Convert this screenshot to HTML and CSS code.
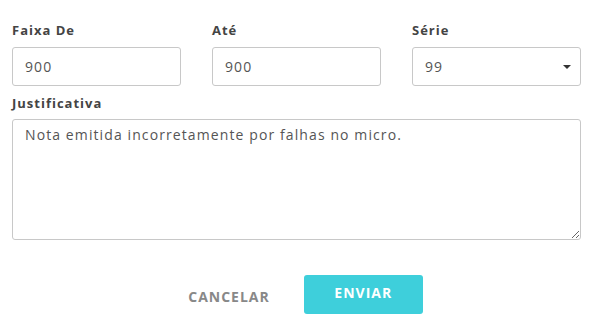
FILE: index.html
```html
<!DOCTYPE html>
<html lang="pt-br">
<head>
    <meta charset="UTF-8">
    <title>Inutilizar Numeração</title>
    <link rel="stylesheet" href="styles.css">
</head>
<body>
    <form class="form">
        <div class="row">
            <div class="form-group">
                <label for="faixa-de">Faixa De</label>
                <input type="text" id="faixa-de" value="900">
            </div>
            <div class="form-group">
                <label for="ate">Até</label>
                <input type="text" id="ate" value="900">
            </div>
            <div class="form-group">
                <label for="serie">Série</label>
                <div class="select">
                    <select id="serie">
                        <option>99</option>
                    </select>
                    <span class="caret"></span>
                </div>
            </div>
        </div>

        <div class="form-group">
            <label for="justificativa">Justificativa</label>
            <textarea id="justificativa">Nota emitida incorretamente por falhas no micro.</textarea>
        </div>

        <div class="actions">
            <button type="button" class="btn-cancel">Cancelar</button>
            <button type="button" class="btn-send">Enviar</button>
        </div>
    </form>
</body>
</html>
```

FILE: styles.css
```css
body {
    margin: 0;
    padding: 20px 11px 0 12px;
    font-family: "Open Sans", sans-serif;
    background-color: white;
    color: #444;
}

.row {
    display: grid;
    grid-template-columns: repeat(3, 1fr);
    gap: 31px;
}

.form-group label {
    display: block;
    font-size: 13px;
    font-weight: bold;
    letter-spacing: 1px;
    color: #444;
    margin-bottom: 7px;
    line-height: 20px;
}

.form-group input,
.form-group select,
.form-group textarea {
    width: 100%;
    box-sizing: border-box;
    border: 1px solid #c8c8c8;
    border-radius: 3px;
    font-family: "Open Sans", sans-serif;
    font-size: 14px;
    letter-spacing: 1.1px;
    color: #555;
    background-color: white;
}

.form-group input,
.form-group select {
    height: 39px;
    padding: 0 12px;
}

.select {
    position: relative;
}

.select select {
    appearance: none;
    -webkit-appearance: none;
}

.caret {
    position: absolute;
    right: 10px;
    top: 18px;
    border-left: 4px solid transparent;
    border-right: 4px solid transparent;
    border-top: 4px solid #333;
}

.row + .form-group {
    margin-top: 7px;
}

.row + .form-group label {
    margin-bottom: 6px;
}

.form-group textarea {
    display: block;
    height: 121px;
    padding: 5px 12px;
    resize: vertical;
}

.actions {
    display: flex;
    justify-content: center;
    align-items: center;
    gap: 34px;
    margin-top: 33px;
    padding-left: 18px;
}

.actions button {
    font-family: "Open Sans", sans-serif;
    font-size: 14px;
    font-weight: bold;
    letter-spacing: 1px;
    text-transform: uppercase;
    border: none;
    cursor: pointer;
    height: 39px;
    border-radius: 3px;
}

.btn-cancel {
    background: none;
    color: #888;
    padding: 0;
    margin-top: 4px;
}

.btn-send {
    width: 119px;
    background-color: #3ecfdb;
    color: white;
    padding-bottom: 6px;
}
```
